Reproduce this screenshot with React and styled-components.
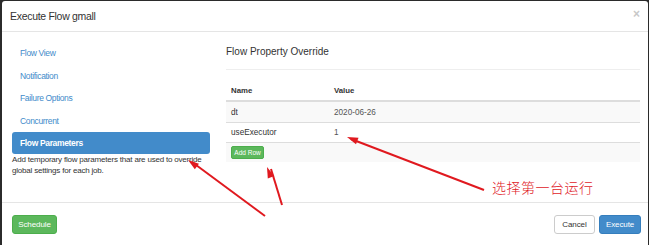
import React from "react";
import styled, { createGlobalStyle, css } from "styled-components";

const GlobalStyle = createGlobalStyle`
  html, body {
    margin: 0;
    padding: 0;
    height: 245px;
    overflow: hidden;
    background: #2b2b2b;
  }
  * { box-sizing: border-box; }
`;

const navItems = ["Flow View", "Notification", "Failure Options", "Concurrent", "Flow Parameters"];

const params = [
  { name: "dt", value: "2020-06-26" },
  { name: "useExecutor", value: "1" },
];

// red annotation lines: [tipX, tipY, tailX, tailY]
const arrows = [
  [347, 137, 484, 190],
  [267, 167, 282, 205],
  [188, 160, 265, 216],
];

const Arrowhead = ({ x1, y1, x2, y2 }) => {
  const ang = Math.atan2(y2 - y1, x2 - x1);
  const len = 11;
  const w = 3.5;
  const bx = x1 + Math.cos(ang) * len;
  const by = y1 + Math.sin(ang) * len;
  const px = -Math.sin(ang) * w;
  const py = Math.cos(ang) * w;
  return (
    <polygon
      points={`${x1},${y1} ${bx + px},${by + py} ${bx - px},${by - py}`}
      fill="#e0191f"
    />
  );
};

export default function App() {
  return (
    <>
      <GlobalStyle />
      <Modal>
        <Header>
          <Title>Execute Flow gmall</Title>
          <Close>×</Close>
        </Header>
        <Body>
          <Sidebar>
            {navItems.map((item) => (
              <NavItem key={item} active={item === "Flow Parameters"}>
                {item}
              </NavItem>
            ))}
            <Description>
              Add temporary flow parameters that are used to override global settings for each job.
            </Description>
          </Sidebar>
          <Content>
            <SectionTitle>Flow Property Override</SectionTitle>
            <Table>
              <HeadRow>
                <NameCell>Name</NameCell>
                <Cell>Value</Cell>
              </HeadRow>
              {params.map((p, i) => (
                <Row key={p.name} striped={i % 2 === 0}>
                  <NameCell>{p.name}</NameCell>
                  <ValueCell>{p.value}</ValueCell>
                </Row>
              ))}
              <Row striped>
                <AddRow>Add Row</AddRow>
              </Row>
            </Table>
          </Content>
        </Body>
        <Footer>
          <Button variant="success">Schedule</Button>
          <FooterRight>
            <Button variant="default">Cancel</Button>
            <Button variant="primary">Execute</Button>
          </FooterRight>
        </Footer>
      </Modal>
      <Annotations width="649" height="245">
        {arrows.map(([x1, y1, x2, y2], i) => (
          <g key={i}>
            <line x1={x1 + 4} y1={y1 + 2} x2={x2} y2={y2} stroke="#e0191f" strokeWidth="2" />
            <Arrowhead x1={x1} y1={y1} x2={x2} y2={y2} />
          </g>
        ))}
      </Annotations>
      <Note>选择第一台运行</Note>
    </>
  );
}

const Modal = styled.div`
  margin: 1px 0 0 2px;
  width: 646px;
  height: 250px;
  background: #fff;
  border-radius: 3px;
  font-family: "Liberation Sans", Arial, sans-serif;
  color: #333;
`;

const Header = styled.div`
  height: 31px;
  display: flex;
  align-items: center;
  justify-content: space-between;
  padding: 0 8px 0 8px;
  border-bottom: 1px solid #e5e5e5;
`;

const Title = styled.div`
  font-size: 10.5px;
  letter-spacing: -0.3px;
  color: #333;
`;

const Close = styled.div`
  font-size: 12px;
  font-weight: bold;
  color: #c8c8c8;
  margin-top: -4px;
`;

const Body = styled.div`
  display: flex;
  height: 170px;
  padding: 10px 8px 0 10px;
`;

const Sidebar = styled.div`
  width: 198px;
  display: flex;
  flex-direction: column;
`;

const NavItem = styled.div`
  height: 22.7px;
  line-height: 22.7px;
  padding-left: 8px;
  font-size: 8.5px;
  letter-spacing: -0.35px;
  color: #428bca;
  border-radius: 3px;
  ${({ active }) =>
    active &&
    css`
      background: #428bca;
      color: #fff;
      font-weight: bold;
      margin-top: -1px;
    `}
`;

const Description = styled.div`
  width: 200px;
  font-size: 8px;
  letter-spacing: -0.2px;
  line-height: 11px;
  color: #333;
`;

const Content = styled.div`
  flex: 1;
  margin-left: 16px;
`;

const SectionTitle = styled.div`
  font-size: 10px;
  line-height: 20px;
  color: #333;
  padding-bottom: 7px;
  border-bottom: 1px solid #eee;
  margin-bottom: 10px;
`;

const Table = styled.div`
  display: flex;
  flex-direction: column;
  font-size: 8.2px;
`;

const HeadRow = styled.div`
  display: flex;
  align-items: center;
  height: 22px;
  font-size: 7.8px;
  font-weight: bold;
  border-bottom: 2px solid #ddd;
`;

const Row = styled.div`
  display: flex;
  align-items: center;
  height: 20px;
  border-top: 1px solid #ddd;
  background: ${({ striped }) => (striped ? "#f9f9f9" : "#fff")};
  &:nth-child(2) {
    border-top: none;
  }
`;

const Cell = styled.div`
  padding-left: 5px;
`;

const NameCell = styled(Cell)`
  width: 103px;
  color: #333;
`;

const ValueCell = styled(Cell)`
  color: #555;
`;

const AddRow = styled.div`
  margin-left: 5px;
  width: 33px;
  height: 13px;
  line-height: 12px;
  text-align: center;
  font-size: 6.5px;
  color: #fff;
  background: #5cb85c;
  border: 1px solid #4cae4c;
  border-radius: 2px;
`;

const Footer = styled.div`
  display: flex;
  justify-content: space-between;
  border-top: 1px solid #e5e5e5;
  padding: 12px 7px 0 10px;
`;

const FooterRight = styled.div`
  display: flex;
  gap: 4px;
`;

const variants = {
  success: css`
    width: 45px;
    background: #5cb85c;
    border-color: #4cae4c;
    color: #fff;
  `,
  default: css`
    width: 41px;
    background: #fff;
    border-color: #ccc;
    color: #333;
  `,
  primary: css`
    width: 42px;
    background: #428bca;
    border-color: #357ebd;
    color: #fff;
  `,
};

const Button = styled.div`
  height: 19px;
  line-height: 17px;
  text-align: center;
  font-size: 8px;
  letter-spacing: -0.1px;
  border: 1px solid;
  border-radius: 3px;
  ${({ variant }) => variants[variant]}
`;

const Annotations = styled.svg`
  position: absolute;
  left: 0;
  top: 0;
  pointer-events: none;
`;

const Note = styled.div`
  position: absolute;
  left: 492px;
  top: 177px;
  font-family: "Noto Sans CJK SC", sans-serif;
  font-weight: 300;
  font-size: 14px;
  letter-spacing: 0.5px;
  color: #e0191f;
`;
